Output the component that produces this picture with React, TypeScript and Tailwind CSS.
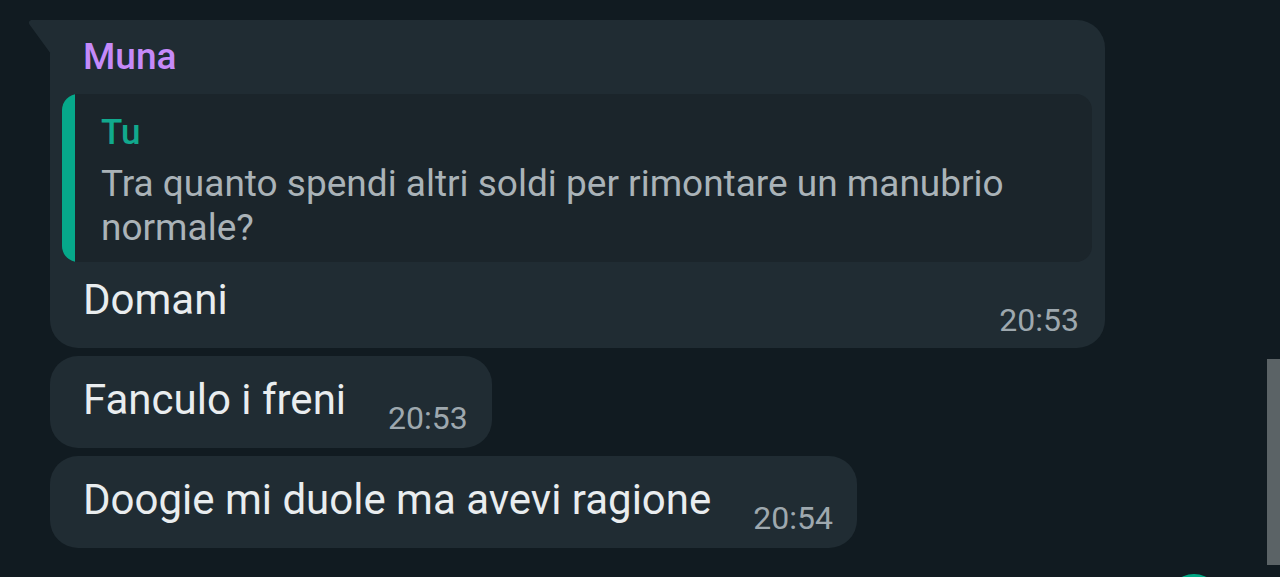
export default function App() {
  return (
    <div
      className="relative h-[577px] w-full overflow-hidden bg-[#111b21] pl-[50px] pt-[20px]"
      style={{ fontFamily: "Roboto, 'Noto Sans', sans-serif" }}
    >
      <div className="flex flex-col items-start gap-[8px]">
        {/* reply bubble */}
        <div className="relative w-[1055px] rounded-[28px] rounded-tl-none bg-[#202c33] pb-[11px] pl-[12px] pr-[13px] pt-[17px]">
          <svg className="absolute left-[-22px] top-0" width="23" height="34" viewBox="0 0 23 34">
            <path d="M4 0 H23 V34 L1.5 4.5 C0 2.5 1.5 0 4 0 Z" fill="#202c33" />
          </svg>
          <div className="pl-[21px] text-[37px] font-medium leading-[40px] text-[#c58af9]">Muna</div>
          <div className="mt-[17px] flex overflow-hidden rounded-[16px] bg-[#1b252b]">
            <div className="w-[13px] shrink-0 rounded-l-[16px] bg-[#06a88a]" />
            <div className="pb-[12px] pl-[26px] pr-[60px] pt-[20px]">
              <div className="text-[35px] font-medium leading-[38px] text-[#11a98d]">Tu</div>
              <div className="mt-[10px] text-[37px] leading-[44px] text-[#aab3b8]">
                Tra quanto spendi altri soldi per rimontare un manubrio normale?
              </div>
            </div>
          </div>
          <div className="flex items-end justify-between pl-[21px] pr-[13px]">
            <span className="mb-[13px] mt-[14px] text-[42px] leading-[48px] text-[#e9edef]">Domani</span>
            <span className="text-[32px] leading-[34px] text-[#9ea8ae]">20:53</span>
          </div>
        </div>

        <Bubble text="Fanculo i freni" time="20:53" />
        <Bubble text="Doogie mi duole ma avevi ragione" time="20:54" />
      </div>

      {/* scrollbar */}
      <div className="absolute right-0 top-[359px] h-[206px] w-[13px] bg-[#5b6366]" />
      {/* fab peeking in */}
      <div className="absolute left-[1166px] top-[574px] h-[56px] w-[56px] rounded-full bg-[#00a884]" />
    </div>
  );
}

function Bubble({ text, time }: { text: string; time: string }) {
  return (
    <div className="flex items-end gap-[42px] rounded-[28px] bg-[#202c33] pb-[13px] pl-[33px] pr-[24px] pt-[20px]">
      <span className="mb-[11px] text-[42px] leading-[48px] text-[#e9edef]">{text}</span>
      <span className="text-[32px] leading-[34px] text-[#9ea8ae]">{time}</span>
    </div>
  );
}
